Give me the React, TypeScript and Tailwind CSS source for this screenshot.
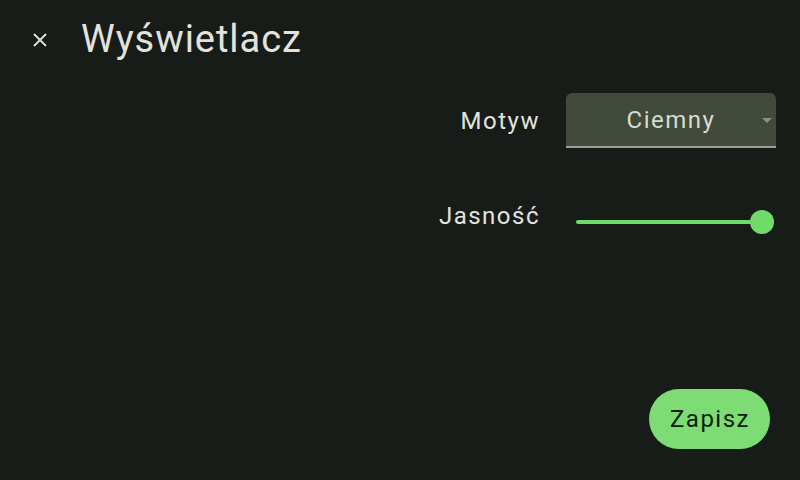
import React, { useState } from "react";

const App = () => {
  const [value] = useState(100);

  return (
    <div
      className="w-[800px] h-[480px] bg-[#181c19] text-[#e2e3dd] flex flex-col overflow-hidden"
      style={{ fontFamily: "Roboto, sans-serif" }}
    >
      {/* header */}
      <div className="flex items-center h-[80px] pl-[29px]">
        <button className="w-[22px] h-[22px] flex items-center justify-center text-[#e2e3dd]">
          <svg width="14" height="14" viewBox="0 0 14 14">
            <path d="M1 1 L13 13 M13 1 L1 13" stroke="currentColor" strokeWidth="1.8" />
          </svg>
        </button>
        <h1 className="ml-[30px] text-[38px] leading-none tracking-[0.95px] mb-[2px]">Wyświetlacz</h1>
      </div>

      {/* settings */}
      <div className="flex flex-col items-end pr-[24px] pt-[13px] gap-[61px]">
        <div className="flex items-center gap-[26px]">
          <span className="text-[24px] tracking-[1.5px]">Motyw</span>
          <div className="relative w-[210px] h-[55px] bg-[#414a3b] rounded-t-[6px] border-b-2 border-[#9ca094] flex items-center justify-center">
            <span className="text-[24px] text-[#d8dccf] tracking-[1.5px]">Ciemny</span>
            <span className="absolute right-[4px] top-[25px] w-0 h-0 border-l-[5px] border-r-[5px] border-t-[5px] border-l-transparent border-r-transparent border-t-[#8c9185]" />
          </div>
        </div>

        <div className="flex items-center gap-[36px] pr-[2px]">
          <span className="text-[24px] tracking-[1.5px] -mt-[12px]">Jasność</span>
          <div className="relative w-[198px] h-[26px] flex items-center">
            <div className="h-[4px] w-full rounded-full bg-[#6fdb68]" style={{ width: `${value}%` }} />
            <div className="absolute right-[0px] top-[1px] w-[24px] h-[24px] rounded-full bg-[#6fdb68]" />
          </div>
        </div>
      </div>

      <div className="flex-1" />

      {/* footer */}
      <div className="flex justify-end pr-[30px] pb-[31px]">
        <button className="h-[60px] pl-[21px] pr-[20px] rounded-full bg-[#7ddd74] text-[#0c200c] text-[24px] tracking-[1.5px]">
          Zapisz
        </button>
      </div>
    </div>
  );
};

export default App;
